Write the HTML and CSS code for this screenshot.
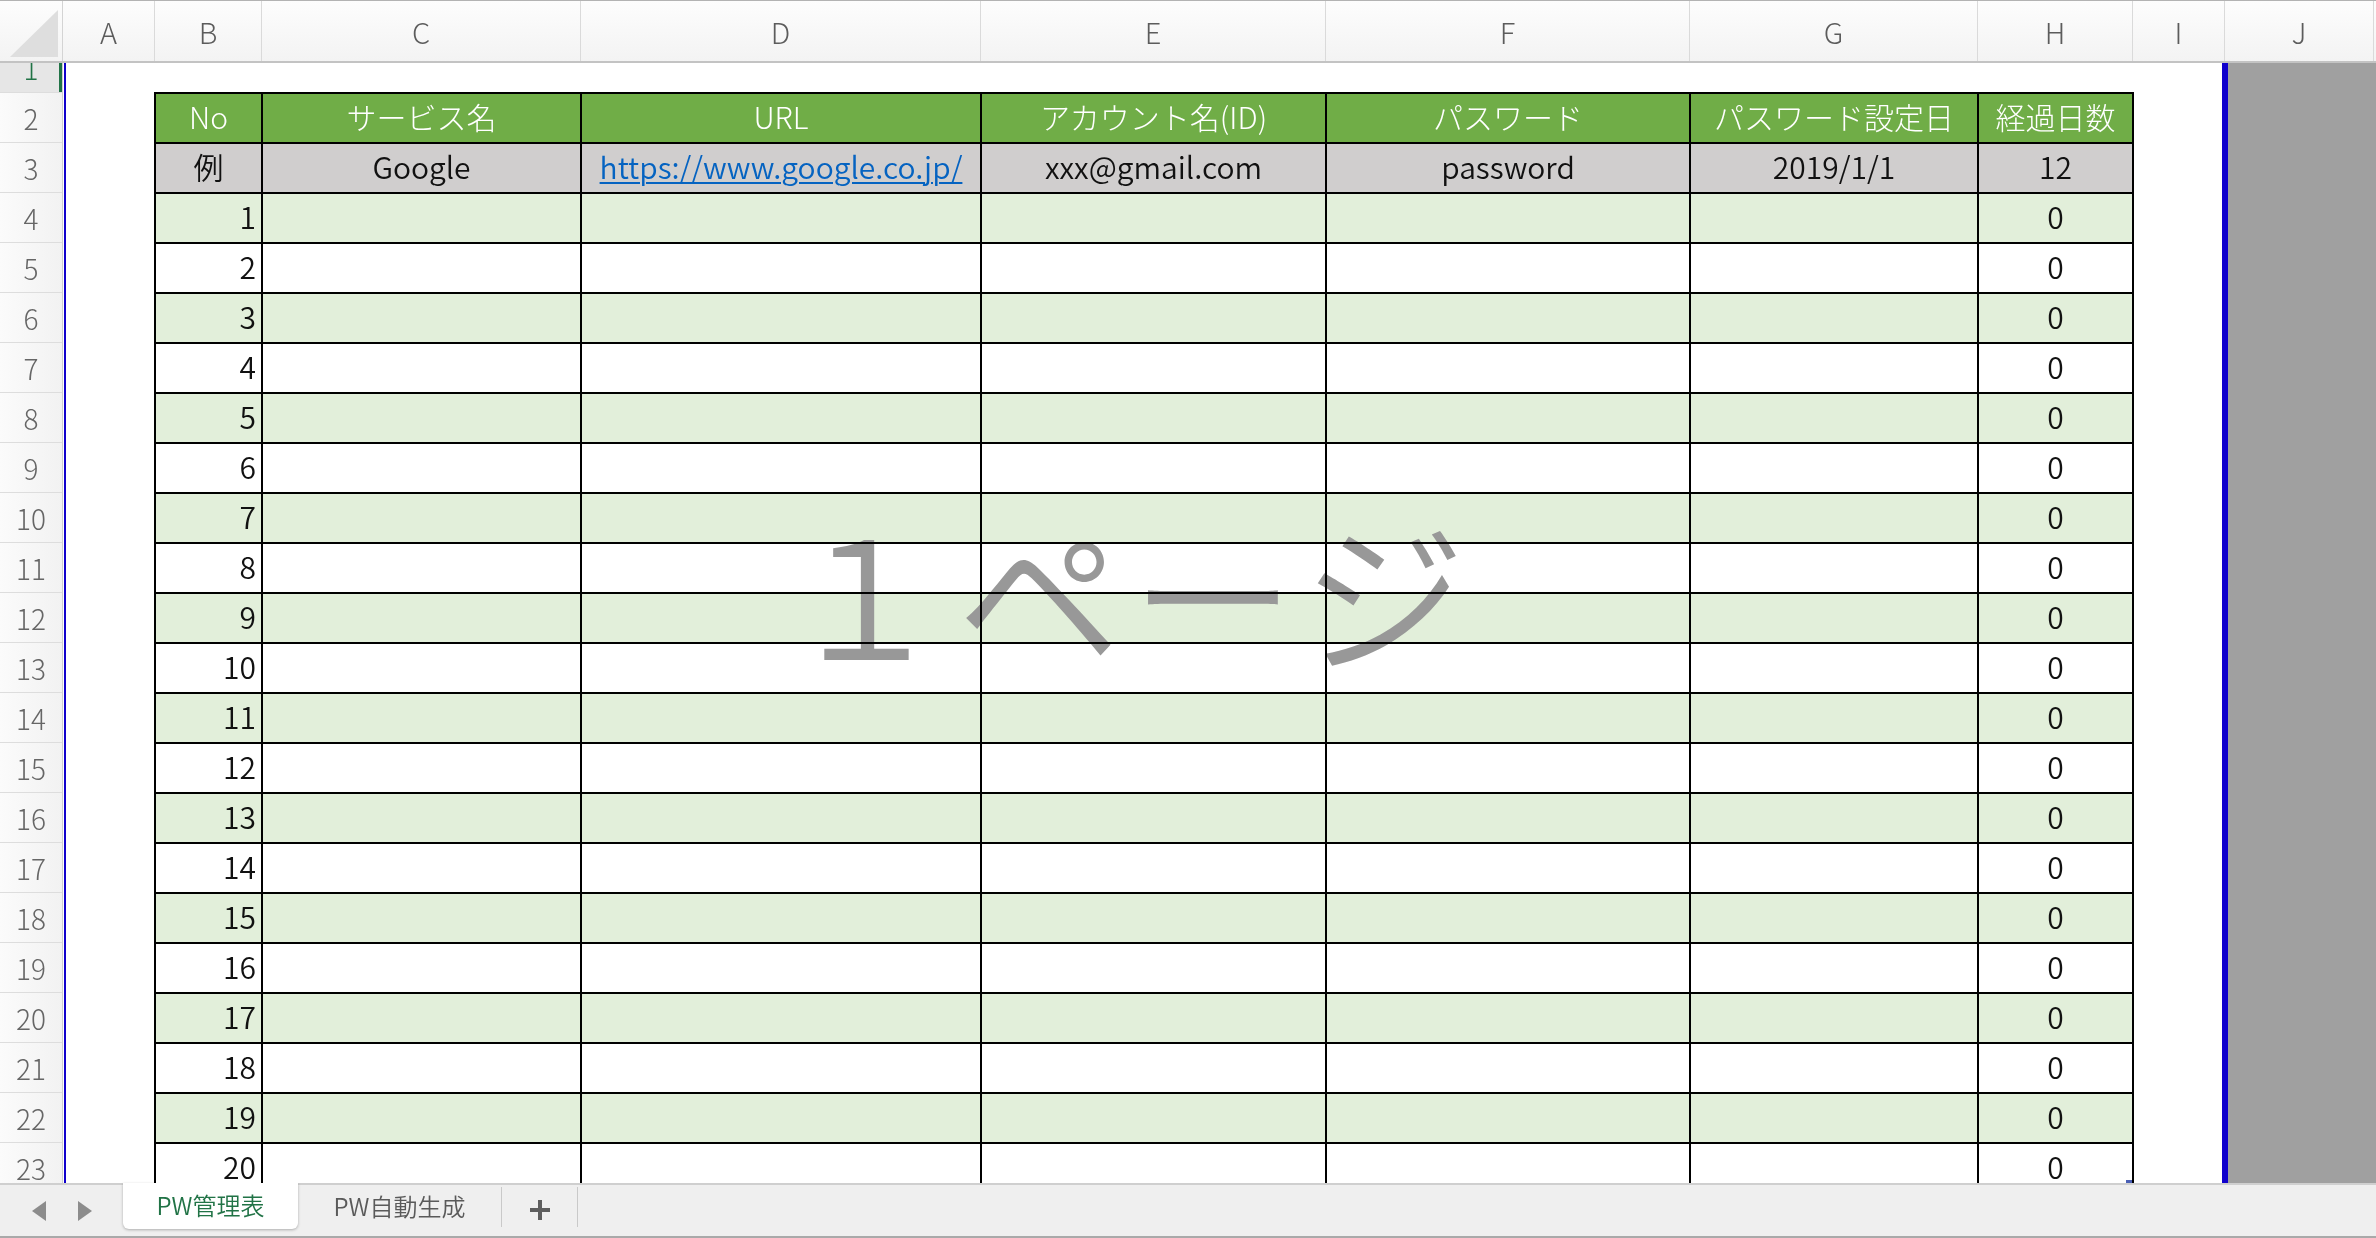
FILE: index.html
```html
<!DOCTYPE html>
<html lang="ja">
<head>
<meta charset="utf-8">
<title>PW管理表</title>
<link rel="stylesheet" href="styles.css">
</head>
<body>
<div class="app">
  <div class="colbar">
    <div class="corner"><svg width="62" height="60" viewBox="0 0 62 60"><polygon points="10,56 58,9 58,56" fill="#dedede"/></svg></div>
    <div class="ch cA">A</div>
    <div class="ch cB">B</div>
    <div class="ch cC">C</div>
    <div class="ch cD">D</div>
    <div class="ch cE">E</div>
    <div class="ch cF">F</div>
    <div class="ch cG">G</div>
    <div class="ch cH">H</div>
    <div class="ch cI">I</div>
    <div class="ch cJ">J</div>
    <div class="ch cK"></div>
  </div>
  <div class="body">
    <div class="rowbar">
      <div class="rowscroll">
        <div class="rh sel">1</div>
        <div class="rh">2</div>
        <div class="rh">3</div>
        <div class="rh">4</div>
        <div class="rh">5</div>
        <div class="rh">6</div>
        <div class="rh">7</div>
        <div class="rh">8</div>
        <div class="rh">9</div>
        <div class="rh">10</div>
        <div class="rh">11</div>
        <div class="rh">12</div>
        <div class="rh">13</div>
        <div class="rh">14</div>
        <div class="rh">15</div>
        <div class="rh">16</div>
        <div class="rh">17</div>
        <div class="rh">18</div>
        <div class="rh">19</div>
        <div class="rh">20</div>
        <div class="rh">21</div>
        <div class="rh">22</div>
        <div class="rh">23</div>
      </div>
    </div>
    <div class="page">
      <div class="pagescroll">
        <div class="tbl">
          <div class="hd">No</div><div class="hd">サービス名</div><div class="hd">URL</div><div class="hd">アカウント名(ID)</div><div class="hd">パスワード</div><div class="hd">パスワード設定日</div><div class="hd">経過日数</div>
          <div class="ex">例</div><div class="ex">Google</div><div class="ex"><a class="link" href="#">https://www.google.co.jp/</a></div><div class="ex">xxx@gmail.com</div><div class="ex">password</div><div class="ex">2019/1/1</div><div class="ex">12</div>
          <div class="g num">1</div><div class="g"></div><div class="g"></div><div class="g"></div><div class="g"></div><div class="g"></div><div class="g">0</div>
          <div class="w num">2</div><div class="w"></div><div class="w"></div><div class="w"></div><div class="w"></div><div class="w"></div><div class="w">0</div>
          <div class="g num">3</div><div class="g"></div><div class="g"></div><div class="g"></div><div class="g"></div><div class="g"></div><div class="g">0</div>
          <div class="w num">4</div><div class="w"></div><div class="w"></div><div class="w"></div><div class="w"></div><div class="w"></div><div class="w">0</div>
          <div class="g num">5</div><div class="g"></div><div class="g"></div><div class="g"></div><div class="g"></div><div class="g"></div><div class="g">0</div>
          <div class="w num">6</div><div class="w"></div><div class="w"></div><div class="w"></div><div class="w"></div><div class="w"></div><div class="w">0</div>
          <div class="g num">7</div><div class="g"></div><div class="g"></div><div class="g"></div><div class="g"></div><div class="g"></div><div class="g">0</div>
          <div class="w num">8</div><div class="w"></div><div class="w"></div><div class="w"></div><div class="w"></div><div class="w"></div><div class="w">0</div>
          <div class="g num">9</div><div class="g"></div><div class="g"></div><div class="g"></div><div class="g"></div><div class="g"></div><div class="g">0</div>
          <div class="w num">10</div><div class="w"></div><div class="w"></div><div class="w"></div><div class="w"></div><div class="w"></div><div class="w">0</div>
          <div class="g num">11</div><div class="g"></div><div class="g"></div><div class="g"></div><div class="g"></div><div class="g"></div><div class="g">0</div>
          <div class="w num">12</div><div class="w"></div><div class="w"></div><div class="w"></div><div class="w"></div><div class="w"></div><div class="w">0</div>
          <div class="g num">13</div><div class="g"></div><div class="g"></div><div class="g"></div><div class="g"></div><div class="g"></div><div class="g">0</div>
          <div class="w num">14</div><div class="w"></div><div class="w"></div><div class="w"></div><div class="w"></div><div class="w"></div><div class="w">0</div>
          <div class="g num">15</div><div class="g"></div><div class="g"></div><div class="g"></div><div class="g"></div><div class="g"></div><div class="g">0</div>
          <div class="w num">16</div><div class="w"></div><div class="w"></div><div class="w"></div><div class="w"></div><div class="w"></div><div class="w">0</div>
          <div class="g num">17</div><div class="g"></div><div class="g"></div><div class="g"></div><div class="g"></div><div class="g"></div><div class="g">0</div>
          <div class="w num">18</div><div class="w"></div><div class="w"></div><div class="w"></div><div class="w"></div><div class="w"></div><div class="w">0</div>
          <div class="g num">19</div><div class="g"></div><div class="g"></div><div class="g"></div><div class="g"></div><div class="g"></div><div class="g">0</div>
          <div class="w num">20</div><div class="w"></div><div class="w"></div><div class="w"></div><div class="w"></div><div class="w"></div><div class="w">0</div>
        </div>
      </div>
      <div class="wm">１ページ</div>
      <div class="handle"></div>
    </div>
    <div class="outside"></div>
  </div>
  <div class="tabbar">
    <div class="nav">
      <svg class="arrow" width="14" height="20" viewBox="0 0 14 20"><polygon points="14,0 14,20 0,10" fill="#8c8c8c"/></svg>
      <svg class="arrow" width="14" height="20" viewBox="0 0 14 20"><polygon points="0,0 0,20 14,10" fill="#8c8c8c"/></svg>
    </div>
    <div class="tab active">PW管理表</div>
    <div class="tab other">PW自動生成</div>
    <div class="sep"></div>
    <div class="plus"><svg width="20" height="20" viewBox="0 0 20 20"><rect x="8" y="0" width="4" height="20" fill="#5e5e5e"/><rect x="0" y="8" width="20" height="4" fill="#5e5e5e"/></svg></div>
    <div class="sep"></div>
  </div>
</div>
</body>
</html>
```
FILE: styles.css
```css
* { box-sizing: border-box; }
html, body { margin: 0; padding: 0; }
body {
  width: 2376px;
  height: 1238px;
  overflow: hidden;
  background: #ffffff;
  font-family: "Noto Sans CJK JP", "Noto Sans", sans-serif;
  font-weight: 300;
}
.app {
  display: flex;
  flex-direction: column;
  height: 1238px;
}

/* column header bar */
.colbar {
  flex: none;
  display: flex;
  height: 63px;
  border-top: 1px solid #b3b3b3;
  border-bottom: 2px solid #c3c3c3;
  background: linear-gradient(#fdfdfd, #f3f3f3);
}
.corner {
  flex: none;
  width: 63px;
  border-right: 1px solid #d4d4d4;
}
.corner svg { display: block; }
.ch {
  flex: none;
  display: flex;
  align-items: center;
  justify-content: center;
  border-right: 1px solid #dadada;
  font-size: 29px;
  color: #5c5c5c;
}
.cA { width: 92px; }
.cB { width: 107px; }
.cC { width: 319px; }
.cD { width: 400px; }
.cE { width: 345px; }
.cF { width: 364px; }
.cG { width: 288px; }
.cH { width: 155px; }
.cI { width: 92px; }
.cJ { width: 149px; }
.cK { flex: 1; border-right: none; }

/* sheet body */
.body {
  flex: none;
  display: flex;
  height: 1120px;
  overflow: hidden;
}
.rowbar {
  flex: none;
  width: 63px;
  border-right: 1px solid #cfcfcf;
  background: linear-gradient(90deg, #fbfbfb, #f2f2f2);
  overflow: hidden;
}
.rowscroll { margin-top: -21px; }
.rh {
  height: 50px;
  border-top: 1px solid #dddddd;
  display: flex;
  align-items: center;
  justify-content: center;
  font-size: 28px;
  color: #666666;
}
.rh.sel {
  background: #e6e6e6;
  color: #217346;
  box-shadow: inset -3px 0 0 #217346;
}

.page {
  flex: none;
  position: relative;
  width: 2164px;
  margin-left: 1px;
  border-left: 2px solid #1000cc;
  border-right: 6px solid #1000cc;
  overflow: hidden;
}
.pagescroll {
  margin-top: -21px;
  padding-top: 50px;
  padding-left: 88px;
}
.outside {
  flex: 1;
  background: #a0a0a0;
}

/* the data table */
.tbl {
  display: grid;
  grid-template-columns: 105px 317px 398px 343px 362px 286px 153px;
  grid-auto-rows: 48px;
  gap: 2px;
  padding: 2px;
  background: #000000;
  width: max-content;
}
.tbl > div {
  font-size: 30px;
  font-weight: 350;
  line-height: 45px;
  text-align: center;
  white-space: nowrap;
  overflow: hidden;
  color: #111111;
}
.tbl > .hd { background: #70ad47; color: #ffffff; font-weight: 300; }
.tbl > .ex { background: #d0cece; }
.tbl > .g { background: #e2efda; }
.tbl > .w { background: #ffffff; }
.tbl > .num { text-align: right; padding-right: 5px; }
.link {
  color: #0563c1;
  text-decoration: underline;
  text-decoration-thickness: 2px;
  text-underline-offset: 3px;
}

.wm {
  position: absolute;
  left: 717px;
  top: 444px;
  font-size: 164px;
  font-weight: 350;
  line-height: 164px;
  letter-spacing: 10px;
  color: #989898;
  white-space: nowrap;
  mix-blend-mode: darken;
  pointer-events: none;
}
.handle {
  position: absolute;
  left: 2060px;
  top: 1117px;
  width: 6px;
  height: 4px;
  background: #4a5fb5;
}

/* sheet tabs */
.tabbar {
  flex: none;
  display: flex;
  align-items: flex-start;
  height: 55px;
  border-top: 2px solid #cfcfcf;
  border-bottom: 2px solid #a9a9a9;
  background: #efefef;
}
.nav {
  flex: none;
  width: 123px;
  height: 51px;
  display: flex;
  align-items: center;
  gap: 32px;
  padding-left: 32px;
}
.arrow { display: block; }
.tab {
  flex: none;
  display: flex;
  align-items: center;
  justify-content: center;
  font-size: 24px;
  font-weight: 350;
}
.tab.active {
  width: 175px;
  height: 46px;
  margin-top: -2px;
  padding-bottom: 3px;
  background: #ffffff;
  color: #217346;
  border-radius: 0 0 6px 6px;
  box-shadow: 0 1px 3px rgba(0, 0, 0, 0.28);
}
.tab.other {
  width: 203px;
  height: 40px;
  color: #5a5a5a;
}
.sep {
  flex: none;
  width: 1px;
  height: 40px;
  margin-top: 2px;
  background: #c9c9c9;
}
.plus {
  flex: none;
  width: 75px;
  height: 50px;
  display: flex;
  align-items: center;
  justify-content: center;
}
.plus svg { display: block; }
```
